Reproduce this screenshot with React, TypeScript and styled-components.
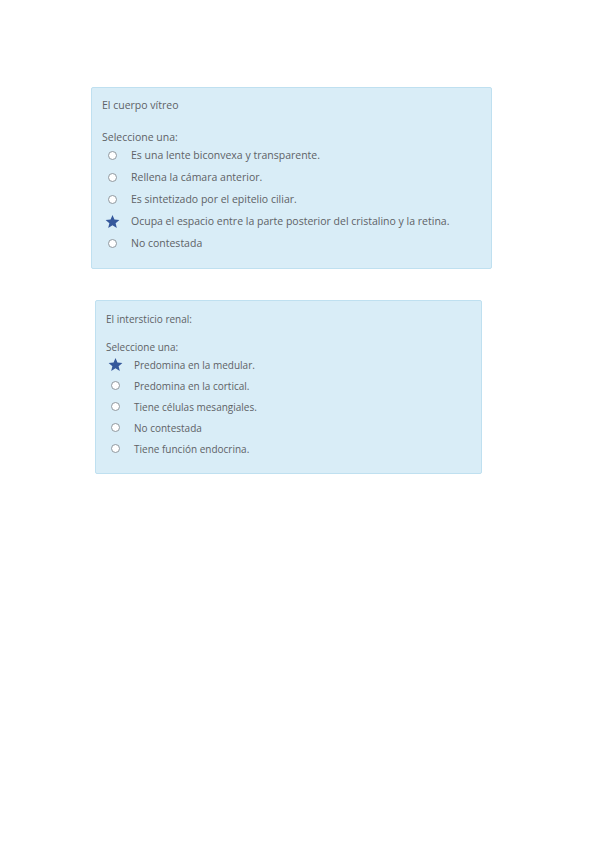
import React from 'react';
import styled, { createGlobalStyle } from 'styled-components';

const GlobalStyle = createGlobalStyle`
  html, body {
    margin: 0;
    padding: 0;
    background: #ffffff;
  }
  body {
    font-family: 'Open Sans', 'Liberation Sans', sans-serif;
    color: #5e6266;
  }
`;

const Page = styled.div`
  width: 599px;
  min-height: 848px;
  padding-top: 87px;
  box-sizing: border-box;
`;

const Card = styled.div<{ $left: number; $width: number; $top: number; $rowH: number; $pad: number; $fs: number }>`
  margin-left: ${p => p.$left}px;
  margin-top: ${p => p.$top}px;
  width: ${p => p.$width}px;
  box-sizing: border-box;
  background: #d9edf7;
  border: 1px solid #bfe0f0;
  border-radius: 2px;
  padding: ${p => p.$pad}px 10px 14px 10px;
  font-size: ${p => p.$fs}px;

  .row {
    height: ${p => p.$rowH}px;
  }
`;

const Title = styled.div<{ $gap: number }>`
  line-height: 14px;
  margin-bottom: ${p => p.$gap}px;
`;

const Prompt = styled.div`
  line-height: 14px;
`;

const Options = styled.div`
  display: flex;
  flex-direction: column;
`;

const Option = styled.div<{ $indent: number }>`
  display: flex;
  align-items: center;
  padding-left: ${p => p.$indent}px;
`;

const Mark = styled.span`
  width: 16px;
  height: 16px;
  display: flex;
  align-items: center;
  justify-content: center;
  margin-right: 11px;
  flex-shrink: 0;
`;

const Radio = styled.span`
  width: 9px;
  height: 9px;
  border-radius: 50%;
  background: #ffffff;
  border: 1px solid #8f989f;
  box-sizing: border-box;
`;

const Star = () => (
  <svg width="15" height="15" viewBox="0 0 24 24">
    <path
      d="M12 1.5l3.1 7.3 7.9.6-6 5.2 1.9 7.7L12 18.1l-6.9 4.2L7 14.6 1 9.4l7.9-.6z"
      fill="#35589c"
    />
  </svg>
);

type Question = {
  title: string;
  options: string[];
  starred: number;
};

const q1: Question = {
  title: 'El cuerpo vítreo',
  options: [
    'Es una lente biconvexa y transparente.',
    'Rellena la cámara anterior.',
    'Es sintetizado por el epitelio ciliar.',
    'Ocupa el espacio entre la parte posterior del cristalino y la retina.',
    'No contestada',
  ],
  starred: 3,
};

const q2: Question = {
  title: 'El intersticio renal:',
  options: [
    'Predomina en la medular.',
    'Predomina en la cortical.',
    'Tiene células mesangiales.',
    'No contestada',
    'Tiene función endocrina.',
  ],
  starred: 0,
};

const QuestionCard: React.FC<{
  q: Question;
  left: number;
  width: number;
  top: number;
  rowH: number;
  pad: number;
  gap: number;
  fs: number;
  indent: number;
}> = ({ q, left, width, top, rowH, pad, gap, fs, indent }) => (
  <Card $left={left} $width={width} $top={top} $rowH={rowH} $pad={pad} $fs={fs}>
    <Title $gap={gap}>{q.title}</Title>
    <Prompt>Seleccione una:</Prompt>
    <Options>
      {q.options.map((o, i) => (
        <Option className="row" key={o} $indent={indent}>
          <Mark>{i === q.starred ? <Star /> : <Radio />}</Mark>
          <span>{o}</span>
        </Option>
      ))}
    </Options>
  </Card>
);

export default function App() {
  return (
    <>
      <GlobalStyle />
      <Page>
        <QuestionCard q={q1} left={91} width={401} top={0} rowH={22} pad={10} gap={18} fs={10.5} indent={2} />
        <QuestionCard q={q2} left={95} width={387} top={31} rowH={21} pad={11} gap={14} fs={10} indent={1} />
      </Page>
    </>
  );
}
